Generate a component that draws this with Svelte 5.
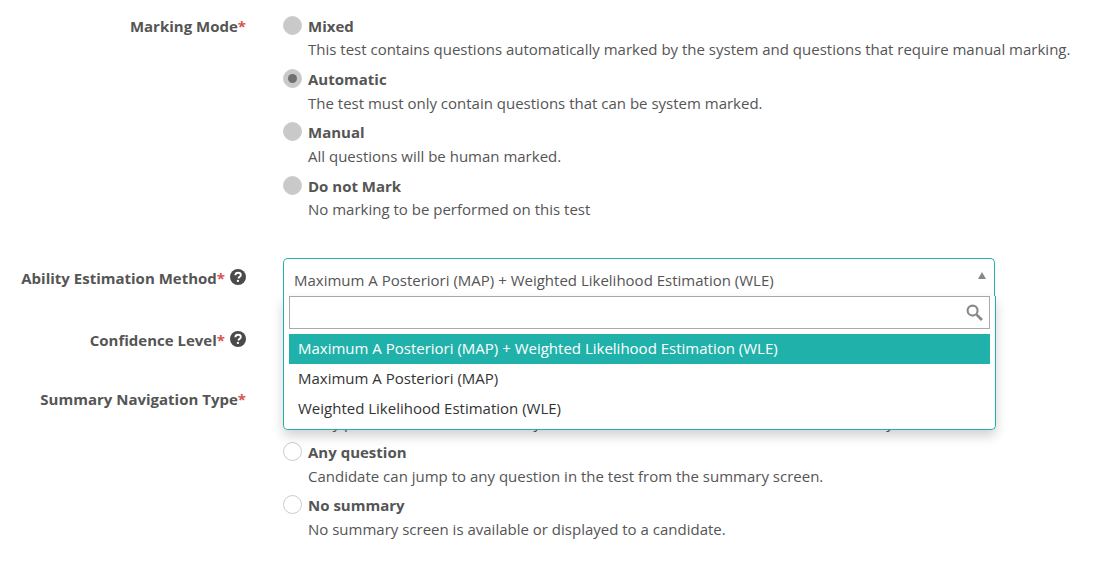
<script>
  const marking = [
    { t: 'Mixed', d: 'This test contains questions automatically marked by the system and questions that require manual marking.', filled: true },
    { t: 'Automatic', d: 'The test must only contain questions that can be system marked.', filled: true, on: true },
    { t: 'Manual', d: 'All questions will be human marked.', filled: true },
    { t: 'Do not Mark', d: 'No marking to be performed on this test', filled: true }
  ];
  const summary = [
    { t: 'Previous only', d: 'Only previous items of a test may be revisited from the screen until the test is finally' },
    { t: 'Any question', d: 'Candidate can jump to any question in the test from the summary screen.' },
    { t: 'No summary', d: 'No summary screen is available or displayed to a candidate.' }
  ];
  const methods = [
    'Maximum A Posteriori (MAP) + Weighted Likelihood Estimation (WLE)',
    'Maximum A Posteriori (MAP)',
    'Weighted Likelihood Estimation (WLE)'
  ];
</script>

{#snippet help()}
  <svg class="help" viewBox="0 0 16 16" aria-hidden="true">
    <circle cx="8" cy="8" r="8" fill="#4a4a4a" />
    <path d="M5.3 6.2C5.4 4.6 6.5 3.7 8.1 3.7c1.6 0 2.7.9 2.7 2.2 0 1-.5 1.5-1.3 2-.7.4-.9.7-.9 1.4v.3" fill="none" stroke="#fff" stroke-width="1.9" />
    <rect x="6.9" y="10.9" width="2" height="2" fill="#fff" />
  </svg>
{/snippet}

{#snippet option(o)}
  <div class="option">
    <span class="radio" class:filled={o.filled} class:on={o.on}></span>
    <div class="text">
      <div class="title">{o.t}</div>
      <div class="desc">{o.d}</div>
    </div>
  </div>
{/snippet}

<div class="form">
  <div class="row mode">
    <div class="label">Marking Mode<span class="req">*</span></div>
    <div class="field">
      {#each marking as o}
        {@render option(o)}
      {/each}
    </div>
  </div>

  <div class="row ability">
    <div class="label">Ability Estimation Method<span class="req">*</span>{@render help()}</div>
    <div class="field">
      <div class="select">
        <span>{methods[0]}</span>
        <span class="caret"></span>
        <div class="drop">
          <div class="search">
            <svg viewBox="0 0 16 16" aria-hidden="true">
              <circle cx="6.2" cy="6.2" r="4.7" fill="none" stroke="#888" stroke-width="2" />
              <path d="M10 10l5 5" stroke="#888" stroke-width="2.6" />
            </svg>
          </div>
          <ul>
            {#each methods as m, i}
              <li class:sel={i === 0}>{m}</li>
            {/each}
          </ul>
        </div>
      </div>
    </div>
  </div>

  <div class="row conf">
    <div class="label">Confidence Level<span class="req">*</span>{@render help()}</div>
    <div class="field"></div>
  </div>

  <div class="row summary">
    <div class="label">Summary Navigation Type<span class="req">*</span></div>
    <div class="field">
      {#each summary as o}
        {@render option(o)}
      {/each}
    </div>
  </div>
</div>

<style>
  :global(body) {
    margin: 0;
    background: #fff;
  }
  .form {
    width: 1103px;
    height: 562px;
    overflow: hidden;
    font-family: "Open Sans", sans-serif;
    font-size: 15px;
    line-height: 20px;
    color: #555;
    padding-top: 16px;
    box-sizing: border-box;
  }
  .row {
    display: grid;
    grid-template-columns: 246px 1fr;
    column-gap: 37px;
  }
  .label {
    text-align: right;
    font-weight: 700;
    color: #555;
  }
  .req {
    color: #d9534f;
  }
  .help {
    width: 16px;
    height: 16px;
    margin-left: 5px;
    vertical-align: -1px;
  }
  .option {
    display: flex;
    gap: 6px;
    height: 53.2px;
  }
  .radio {
    flex: none;
    width: 17px;
    height: 17px;
    border: 1px solid #ccc;
    border-radius: 50%;
    background: #fff;
    display: flex;
    align-items: center;
    justify-content: center;
  }
  .radio.filled {
    background: #c9c9c9;
  }
  .radio.on::after {
    content: "";
    width: 9px;
    height: 9px;
    border-radius: 50%;
    background: #707070;
  }
  .title {
    font-weight: 700;
  }
  .desc {
    margin-top: 3.4px;
    white-space: nowrap;
  }
  .mode {
    height: 242px;
  }
  .ability {
    height: 72px;
    position: relative;
    z-index: 2;
  }
  .ability .label {
    padding-top: 10px;
  }
  .conf {
    height: 59px;
  }
  .select {
    position: relative;
    width: 712px;
    height: 38px;
    box-sizing: border-box;
    border: 1px solid #20b2aa;
    border-bottom: none;
    border-radius: 5px 5px 0 0;
    padding: 11px 10px 0;
    background: #fff;
    color: #555;
  }
  .caret {
    position: absolute;
    right: 8px;
    top: 13px;
    border-left: 4px solid transparent;
    border-right: 4px solid transparent;
    border-bottom: 7px solid #888;
  }
  .drop {
    position: absolute;
    left: -1px;
    top: 37px;
    width: 713px;
    height: 134px;
    box-sizing: border-box;
    background: #fff;
    border: 1px solid #20b2aa;
    border-top: none;
    border-radius: 0 0 5px 5px;
    box-shadow: 0 6px 12px rgba(0, 0, 0, 0.18);
    padding: 0 5px;
    color: #333;
  }
  .search {
    height: 33px;
    width: 701px;
    box-sizing: border-box;
    border: 1px solid #aaa;
    position: relative;
  }
  .search svg {
    position: absolute;
    right: 6px;
    top: 7px;
    width: 17px;
    height: 17px;
  }
  ul {
    list-style: none;
    margin: 5px 0 0;
    padding: 0;
    width: 701px;
  }
  li {
    height: 30px;
    line-height: 29px;
    padding-left: 9px;
    box-sizing: border-box;
  }
  li.sel {
    background: #20b2aa;
    color: #fff;
  }
</style>
